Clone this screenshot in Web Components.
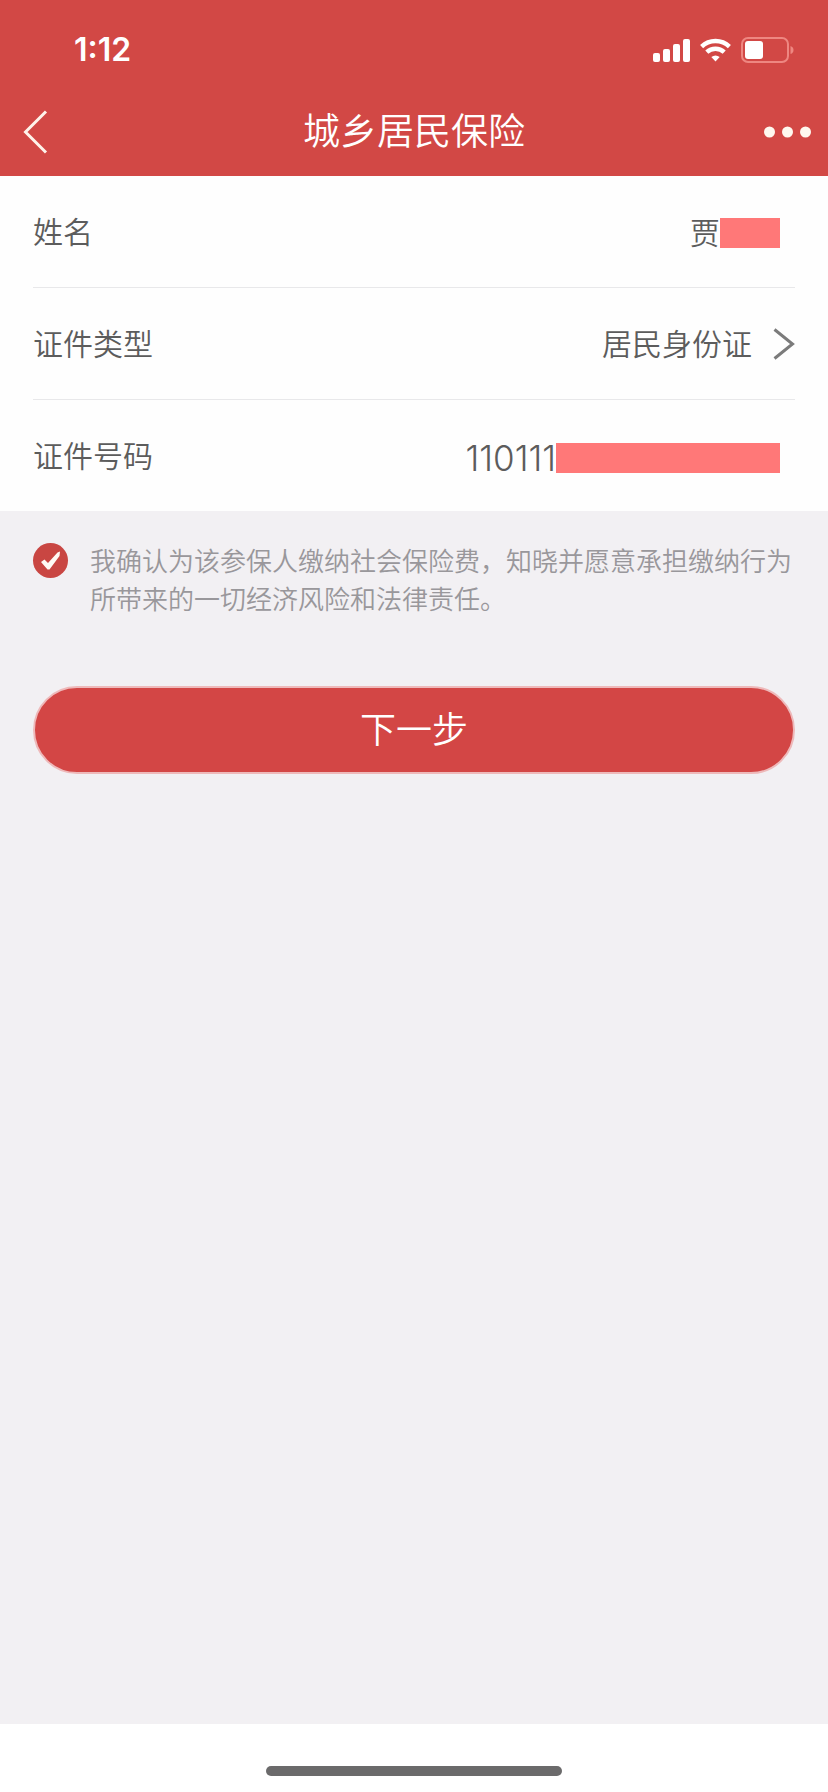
<!DOCTYPE html>
<html lang="zh-CN">
<head>
<meta charset="utf-8">
<meta name="viewport" content="width=device-width, initial-scale=1">
<title>城乡居民保险</title>
<style>
  body {
    margin: 0;
    font-family: Inter, "Noto Sans CJK SC", sans-serif;
    font-weight: 350;
    background: #f2f0f3;
  }
</style>
</head>
<body>
<insurance-page></insurance-page>

<script>
  function define(name, markup) {
    const template = document.createElement('template');
    template.innerHTML = markup;
    customElements.define(name, class extends HTMLElement {
      constructor() {
        super();
        this.attachShadow({ mode: 'open' }).append(template.content.cloneNode(true));
      }
    });
  }

  define('status-bar', `
    <style>
      :host { display: flex; align-items: center; justify-content: space-between; height: 100px; padding: 0 34px 0 74px; box-sizing: border-box; color: #fff; }
      time { font-size: 32px; font-weight: 600; line-height: 40px; }
      .icons { display: flex; align-items: center; gap: 10px; }
      svg { display: block; }
    </style>
    <time>1:12</time>
    <div class="icons">
      <svg width="37" height="24" viewBox="0 0 37 24" fill="#fff" aria-label="信号">
        <rect x="0" y="15" width="7" height="9" rx="2"/><rect x="10" y="11" width="7" height="13" rx="2"/>
        <rect x="20" y="6" width="7" height="18" rx="2"/><rect x="30" y="1" width="7" height="23" rx="2"/>
      </svg>
      <svg width="31" height="24" viewBox="0 0 31 24" aria-label="无线网络">
        <g fill="none" stroke="#fff" stroke-width="4.4">
          <path d="M1.6 8.6A20 20 0 0 1 29.4 8.6"/><path d="M6.8 14.2A12.6 12.6 0 0 1 24.2 14.2"/>
        </g>
        <path fill="#fff" d="M11.3 19A7 7 0 0 1 19.7 19L15.5 23.6Z"/>
      </svg>
      <svg width="53" height="26" viewBox="0 0 53 26" aria-label="电池">
        <rect x="1" y="1" width="46" height="24" rx="6" fill="none" stroke="#ee8781" stroke-width="2"/>
        <rect x="4" y="4" width="18" height="18" rx="3" fill="#fff"/>
        <path d="M49.5 9Q52.5 10 52.5 13T49.5 17Z" fill="#ee8781"/>
      </svg>
    </div>
  `);

  define('nav-bar', `
    <style>
      :host { display: grid; grid-template-columns: 1fr auto 1fr; align-items: center; height: 76px; padding: 0 17px 12px; box-sizing: border-box; color: #fff; }
      h1 { margin: 0; font-size: 37px; line-height: 48px; font-weight: inherit; }
      button { border: 0; padding: 0; background: none; display: flex; align-items: center; height: 48px; }
      .back { justify-self: start; padding-left: 6px; }
      .more { justify-self: end; }
    </style>
    <button type="button" class="back" aria-label="返回">
      <svg width="26" height="44" viewBox="0 0 26 44"><path d="M23 1.500L2.500 22L23 42.500" fill="none" stroke="#fff3ea" stroke-width="3"/></svg>
    </button>
    <h1><slot></slot></h1>
    <button type="button" class="more" aria-label="更多">
      <svg width="47" height="12" viewBox="0 0 47 12" fill="#fff8ef"><circle cx="5.500" cy="6" r="5.500"/><circle cx="23.500" cy="6" r="5.500"/><circle cx="41.500" cy="6" r="5.500"/></svg>
    </button>
  `);

  define('form-row', `
    <style>
      :host { display: flex; align-items: center; justify-content: space-between; height: 112px; box-sizing: border-box; border-bottom: 1px solid #e8e8ea; color: #5c5c5c; font-size: 30px; line-height: 40px; }
      :host([last]) { height: 111px; border-bottom: 0; }
      .value { display: flex; align-items: center; padding-right: 15px; }
      :host([picker]) .value { padding-right: 0; }
    </style>
    <span class="label"><slot name="label"></slot></span>
    <span class="value"><slot></slot></span>
  `);

  define('masked-text', `
    <style>
      :host { display: flex; align-items: center; padding-top: 2px; }
      .mask { width: 60px; height: 30px; background: #ff7878; }
      :host([long]) { font-size: 35px; font-weight: 300; padding-top: 4px; }
      :host([long]) .mask { width: 224px; }
    </style>
    <slot></slot><span class="mask"></span>
  `);

  define('type-picker', `
    <style>
      :host { display: flex; align-items: center; gap: 21px; }
      select { appearance: none; border: 0; margin: 0; padding: 0; background: none; font: inherit; color: inherit; text-align-last: right; }
      svg { display: block; }
    </style>
    <select aria-label="证件类型"><option>居民身份证</option></select>
    <svg width="22" height="32" viewBox="0 0 22 32" aria-hidden="true"><path d="M1.500 1.500L19.500 16L1.500 30.500" fill="none" stroke="#7b7b7b" stroke-width="3"/></svg>
  `);

  define('agree-check', `
    <style>
      :host { display: block; color: #99979b; font-size: 26px; line-height: 38px; }
      label { display: flex; align-items: flex-start; gap: 22px; }
      .box { display: grid; flex: none; }
      .box > * { grid-area: 1 / 1; }
      input { appearance: none; width: 35px; height: 35px; margin: 0; border-radius: 50%; background: #d4d2d6; }
      input:checked { background: #c94642; }
      input:not(:checked) + svg { display: none; }
      svg { pointer-events: none; }
    </style>
    <label>
      <span class="box">
        <input type="checkbox" checked>
        <svg width="35" height="35" viewBox="0 0 35 35"><path d="M8 19L11.500 16.500L15 20L24.500 9.500L27 8.500L26.500 13L16.500 26.500H14.500Z" fill="#fffaf4"/></svg>
      </span>
      <span><slot></slot></span>
    </label>
  `);

  define('primary-button', `
    <style>
      :host { display: block; }
      button { display: block; width: 100%; height: 88px; padding: 0; border: 2px solid #eeb9ba; border-radius: 44px; background: #d34645; color: #fff; font: inherit; font-size: 36px; line-height: 48px; }
    </style>
    <button type="submit"><slot></slot></button>
  `);

  define('home-indicator', `
    <style>
      :host { display: flex; align-items: flex-end; justify-content: center; height: 68px; padding-bottom: 16px; box-sizing: border-box; background: #fff; }
      span { width: 296px; height: 10px; border-radius: 5px; background: #6b6a6b; }
    </style>
    <span></span>
  `);

  define('insurance-page', `
    <style>
      :host { display: flex; flex-direction: column; min-height: 100vh; }
      header { background: #d24845; }
      main { flex: 1; }
      .fields { padding: 0 33px; background: #fefefe; }
      agree-check { padding: 32px 33px 0; }
      primary-button { padding: 67px 33px 0; }
    </style>
    <header>
      <status-bar></status-bar>
      <nav-bar>城乡居民保险</nav-bar>
    </header>
    <main>
      <div class="fields">
        <form-row><span slot="label">姓名</span><masked-text>贾</masked-text></form-row>
        <form-row picker><span slot="label">证件类型</span><type-picker></type-picker></form-row>
        <form-row last><span slot="label">证件号码</span><masked-text long>110111</masked-text></form-row>
      </div>
      <agree-check>我确认为该参保人缴纳社会保险费，知晓并愿意承担缴纳行为所带来的一切经济风险和法律责任。</agree-check>
      <primary-button>下一步</primary-button>
    </main>
    <home-indicator></home-indicator>
  `);
</script>
</body>
</html>
